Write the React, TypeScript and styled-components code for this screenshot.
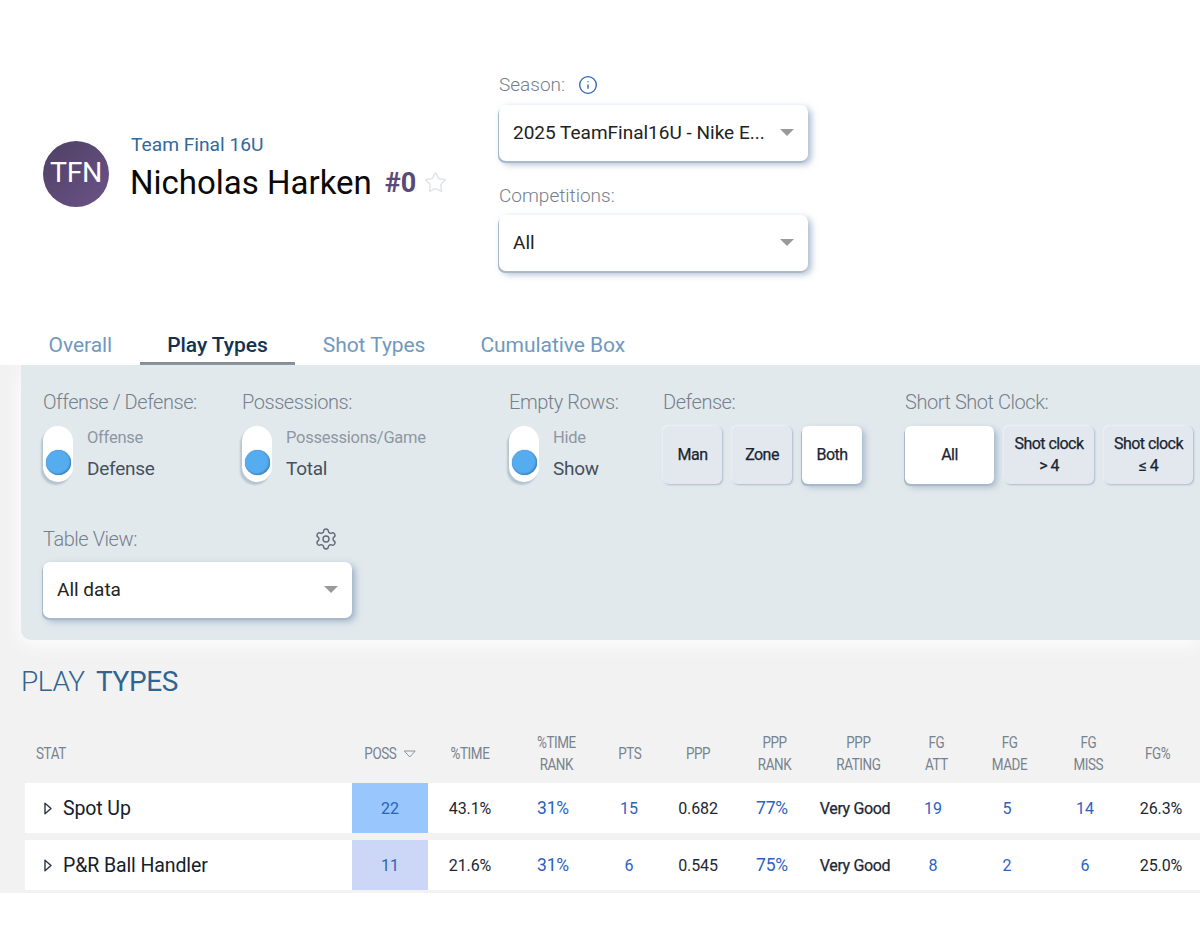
import React from "react";
import styled, { createGlobalStyle } from "styled-components";
import { Info, Settings, Star } from "lucide-react";

const Global = createGlobalStyle`
  html, body { margin: 0; padding: 0; background: #fff; }
  body { font-family: Roboto, "Liberation Sans", sans-serif; overflow: hidden; }
  * { box-sizing: border-box; }
`;

const Page = styled.div`
  width: 1200px;
  height: 950px;
  display: flex;
  flex-direction: column;
  background: #fff;
  overflow: hidden;
`;

const Hero = styled.header`
  display: flex;
  height: 325px;
  padding: 72px 0 0 43px;
`;

const Identity = styled.div`
  width: 456px;
  height: 204px;
  display: flex;
  align-items: center;
  gap: 21px;
`;

const Avatar = styled.div`
  width: 66px;
  height: 66px;
  border-radius: 50%;
  background: linear-gradient(135deg, #4f3f63, #6a5488);
  color: #fff;
  font-size: 28.5px;
  font-weight: 400;
  display: flex;
  align-items: center;
  justify-content: center;
  letter-spacing: -0.4px;
  padding-bottom: 3px;
`;

const NameBlock = styled.div`
  display: flex;
  flex-direction: column;
  gap: 6px;
  margin-top: -13px;
`;

const TeamName = styled.div`
  color: #33689a;
  font-size: 19.2px;
  line-height: 24px;
  padding-left: 1px;
`;

const NameRow = styled.div`
  display: flex;
  align-items: center;
  color: #0a0a0a;
  font-size: 33px;
  line-height: 40px;
`;

const Number = styled.span`
  color: #594a78;
  font-size: 27px;
  font-weight: 700;
  margin-left: 13px;
  margin-right: 8px;
`;

const SelectColumn = styled.div`
  display: flex;
  flex-direction: column;
  width: 309px;
`;

const FieldLabel = styled.div`
  display: flex;
  align-items: center;
  gap: 13px;
  color: #75808c;
  font-size: 19px;
  font-weight: 300;
  line-height: 26px;
  height: 26px;
`;

const SelectBox = styled.div`
  width: 309px;
  height: 56px;
  margin-top: 7px;
  background: #fff;
  border-radius: 7px;
  padding: 0 14px 1px;
  display: flex;
  align-items: center;
  justify-content: space-between;
  color: #222;
  font-size: 19px;
  box-shadow: -1px 2px 0 #a9b9ca, 3px 3px 7px rgba(105, 135, 170, 0.6);
`;

const Caret = styled.span`
  width: 0;
  height: 0;
  border-left: 7px solid transparent;
  border-right: 7px solid transparent;
  border-top: 7px solid #9a9a9a;
`;

const SecondLabel = styled(FieldLabel)`
  margin-top: 22px;
  & + ${SelectBox} {
    margin-top: 6px;
  }
`;

const Tabs = styled.nav`
  display: flex;
  height: 40px;
  padding-left: 21px;
`;

const Tab = styled.div<{ $active?: boolean }>`
  padding: 0 27.5px;
  height: 40px;
  line-height: 40px;
  font-size: 21px;
  letter-spacing: -0.05px;
  font-weight: ${(p) => (p.$active ? 500 : 400)};
  color: ${(p) => (p.$active ? "#12304f" : "#6f98be")};
  border-bottom: ${(p) => (p.$active ? "3px solid #566575" : "none")};
`;

const GraySection = styled.section`
  height: 528px;
  background: #f2f2f2;
  padding-left: 21px;
`;

const Panel = styled.div`
  height: 275px;
  background: #e2e9ed;
  border-bottom-left-radius: 10px;
  padding: 24px 0 0 22px;
  box-shadow: 0 4px 20px #fff;
  position: relative;
`;

const FilterRow = styled.div`
  display: flex;
`;

const Group = styled.div<{ $w: number }>`
  width: ${(p) => p.$w}px;
  flex: none;
`;

const FilterLabel = styled.div`
  color: #75808c;
  font-size: 20px;
  font-weight: 300;
  line-height: 26px;
  height: 26px;
  letter-spacing: -0.45px;
`;

const ToggleWrap = styled.div`
  display: flex;
  gap: 14px;
  margin-top: 11px;
`;

const ToggleTrack = styled.div`
  width: 30px;
  height: 56px;
  background: #fff;
  border-radius: 15px;
  padding: 0 2.5px 7px;
  display: flex;
  align-items: flex-end;
  box-shadow: -2px 3px 2px #b6c4d1;
`;

const Knob = styled.div`
  width: 25px;
  height: 25px;
  border-radius: 50%;
  background: #55adf0;
  box-shadow: inset -1px -1px 2px #3d7fb5, 0 0 1px #3d7fb5;
`;

const ToggleLabels = styled.div`
  display: flex;
  flex-direction: column;
  gap: 9px;
  padding-top: 1px;
`;

const OptionOff = styled.div`
  color: #8d97a3;
  font-size: 16.5px;
  line-height: 22px;
  letter-spacing: -0.25px;
`;

const OptionOn = styled.div`
  color: #46505c;
  font-size: 19px;
  line-height: 22px;
  letter-spacing: -0.25px;
`;

const ButtonRow = styled.div`
  display: flex;
  gap: 10px;
  margin-top: 11px;
`;

const ChoiceButton = styled.div<{ $w: number; $active?: boolean }>`
  width: ${(p) => p.$w}px;
  height: 58px;
  border-radius: 6px;
  display: flex;
  align-items: center;
  justify-content: center;
  text-align: center;
  color: #1a2530;
  font-size: 16px;
  font-weight: 400;
  -webkit-text-stroke: 0.25px #1a2530;
  line-height: 22px;
  letter-spacing: -0.55px;
  background: ${(p) => (p.$active ? "#fff" : "#e3e8ee")};
  box-shadow: ${(p) =>
    p.$active
      ? "-1px 2px 0 #a9b9ca, 3px 3px 6px rgba(105, 135, 170, 0.5)"
      : "1px 1px 2px rgba(130, 150, 175, 0.55), -1px -1px 1px #eef2f5"};
`;

const TableViewRow = styled.div`
  width: 309px;
  margin-top: 42px;
`;

const TableViewHead = styled.div`
  display: flex;
  align-items: center;
  justify-content: space-between;
  padding-right: 14px;
  color: #5f6a76;
`;

const TableSelect = styled(SelectBox)`
  margin-top: 10px;
`;

const Title = styled.h2`
  margin: 0;
  padding-top: 25px;
  height: 85px;
  font-size: 28px;
  line-height: 34px;
  font-weight: 300;
  color: #2f6590;
  letter-spacing: -0.4px;

  strong {
    font-weight: 400;
    margin-left: 5px;
  }
`;

const columns = "327px 76px 84px 82px 70px 68px 80px 86px 70px 78px 78px 74px";

const HeadRow = styled.div`
  display: grid;
  grid-template-columns: ${columns};
  height: 58px;
  margin-left: 4px;
  align-items: center;
`;

const HeadCell = styled.div<{ $shift?: number }>`
  color: #77828e;
  font-size: 16px;
  line-height: 22px;
  text-align: center;
  letter-spacing: -0.5px;
  transform: scaleX(0.84);
  padding-left: ${(p) => Math.max(p.$shift ?? 0, 0)}px;
  padding-right: ${(p) => Math.max(-(p.$shift ?? 0), 0)}px;
`;

const StatHead = styled(HeadCell)`
  text-align: left;
  padding-left: 11px;
  transform-origin: 11px 50%;
`;

const SortHead = styled(HeadCell)`
  display: flex;
  align-items: center;
  justify-content: center;
  gap: 8px;
  padding-left: 0;
`;

const Row = styled.div`
  display: grid;
  grid-template-columns: ${columns};
  height: 50px;
  margin: 0 0 7px 4px;
  background: #fff;
  align-items: stretch;
`;

const Cell = styled.div<{ $link?: boolean; $big?: boolean }>`
  display: flex;
  align-items: center;
  justify-content: center;
  font-size: ${(p) => (p.$big ? 17.5 : 16)}px;
  color: ${(p) => (p.$link ? "#2a62c0" : "#1c2733")};
  letter-spacing: -0.1px;
`;

const StatCell = styled.div`
  display: flex;
  align-items: center;
  padding-left: 19px;
  gap: 11px;
  font-size: 19.5px;
  color: #13202e;
  letter-spacing: -0.1px;
`;

const PossCell = styled(Cell)<{ $bg: string }>`
  background: ${(p) => p.$bg};
  color: #2a62c0;
`;

const RatingCell = styled(Cell)`
  font-weight: 400;
  -webkit-text-stroke: 0.25px #1c2733;
  font-size: 16px;
  letter-spacing: -0.35px;
`;

const Expand = () => (
  <svg width="8" height="13" viewBox="0 0 8 13" fill="none">
    <path d="M1 1.2 L7 6.5 L1 11.8 Z" stroke="#2a3644" strokeWidth="1.4" strokeLinejoin="round" />
  </svg>
);

const SortIcon = () => (
  <svg width="15" height="8" viewBox="0 0 15 8" fill="none">
    <path d="M1 1 H14 L7.5 7 Z" stroke="#808b97" strokeWidth="1" strokeLinejoin="round" />
  </svg>
);

const rows = [
  { name: "Spot Up", poss: "22", bg: "#99c6fd", time: "43.1%", rank: "31%", pts: "15", ppp: "0.682", pppRank: "77%", att: "19", made: "5", miss: "14", fg: "26.3%" },
  { name: "P&R Ball Handler", poss: "11", bg: "#ccd7f7", time: "21.6%", rank: "31%", pts: "6", ppp: "0.545", pppRank: "75%", att: "8", made: "2", miss: "6", fg: "25.0%" },
];

const Toggle = ({ off, on }: { off: string; on: string }) => (
  <ToggleWrap>
    <ToggleTrack><Knob /></ToggleTrack>
    <ToggleLabels>
      <OptionOff>{off}</OptionOff>
      <OptionOn>{on}</OptionOn>
    </ToggleLabels>
  </ToggleWrap>
);

export default function App() {
  return (
    <Page>
      <Global />
      <Hero>
        <Identity>
          <Avatar>TFN</Avatar>
          <NameBlock>
            <TeamName>Team Final 16U</TeamName>
            <NameRow>
              Nicholas Harken
              <Number>#0</Number>
              <Star size={23} color="#dde1e6" strokeWidth={1.4} />
            </NameRow>
          </NameBlock>
        </Identity>
        <SelectColumn>
          <FieldLabel>
            Season:
            <Info size={20} color="#2a62b8" strokeWidth={1.6} />
          </FieldLabel>
          <SelectBox>
            2025 TeamFinal16U - Nike E...
            <Caret />
          </SelectBox>
          <SecondLabel>Competitions:</SecondLabel>
          <SelectBox>
            All
            <Caret />
          </SelectBox>
        </SelectColumn>
      </Hero>
      <Tabs>
        <Tab>Overall</Tab>
        <Tab $active>Play Types</Tab>
        <Tab>Shot Types</Tab>
        <Tab>Cumulative Box</Tab>
      </Tabs>
      <GraySection>
        <Panel>
          <FilterRow>
            <Group $w={199}>
              <FilterLabel>Offense / Defense:</FilterLabel>
              <Toggle off="Offense" on="Defense" />
            </Group>
            <Group $w={267}>
              <FilterLabel>Possessions:</FilterLabel>
              <Toggle off="Possessions/Game" on="Total" />
            </Group>
            <Group $w={154}>
              <FilterLabel>Empty Rows:</FilterLabel>
              <Toggle off="Hide" on="Show" />
            </Group>
            <Group $w={242}>
              <FilterLabel>Defense:</FilterLabel>
              <ButtonRow>
                <ChoiceButton $w={59}>Man</ChoiceButton>
                <ChoiceButton $w={60}>Zone</ChoiceButton>
                <ChoiceButton $w={60} $active>Both</ChoiceButton>
              </ButtonRow>
            </Group>
            <Group $w={300}>
              <FilterLabel>Short Shot Clock:</FilterLabel>
              <ButtonRow>
                <ChoiceButton $w={89} $active>All</ChoiceButton>
                <ChoiceButton $w={90}>Shot clock<br />&gt; 4</ChoiceButton>
                <ChoiceButton $w={89}>Shot clock<br />≤ 4</ChoiceButton>
              </ButtonRow>
            </Group>
          </FilterRow>
          <TableViewRow>
            <TableViewHead>
              <FilterLabel>Table View:</FilterLabel>
              <Settings size={24} strokeWidth={1.4} />
            </TableViewHead>
            <TableSelect>
              All data
              <Caret />
            </TableSelect>
          </TableViewRow>
        </Panel>
        <Title>PLAY <strong>TYPES</strong></Title>
        <HeadRow>
          <StatHead>STAT</StatHead>
          <SortHead>POSS <SortIcon /></SortHead>
          <HeadCell>%TIME</HeadCell>
          <HeadCell $shift={8}>%TIME<br />RANK</HeadCell>
          <HeadCell $shift={2}>PTS</HeadCell>
          <HeadCell>PPP</HeadCell>
          <HeadCell $shift={6}>PPP<br />RANK</HeadCell>
          <HeadCell $shift={8}>PPP<br />RATING</HeadCell>
          <HeadCell $shift={8}>FG<br />ATT</HeadCell>
          <HeadCell $shift={6}>FG<br />MADE</HeadCell>
          <HeadCell $shift={8}>FG<br />MISS</HeadCell>
          <HeadCell $shift={-8}>FG%</HeadCell>
        </HeadRow>
        {rows.map((r) => (
          <Row key={r.name}>
            <StatCell><Expand />{r.name}</StatCell>
            <PossCell $bg={r.bg}>{r.poss}</PossCell>
            <Cell>{r.time}</Cell>
            <Cell $link $big>{r.rank}</Cell>
            <Cell $link>{r.pts}</Cell>
            <Cell>{r.ppp}</Cell>
            <Cell $link $big>{r.pppRank}</Cell>
            <RatingCell>Very Good</RatingCell>
            <Cell $link>{r.att}</Cell>
            <Cell $link>{r.made}</Cell>
            <Cell $link>{r.miss}</Cell>
            <Cell>{r.fg}</Cell>
          </Row>
        ))}
      </GraySection>
    </Page>
  );
}
